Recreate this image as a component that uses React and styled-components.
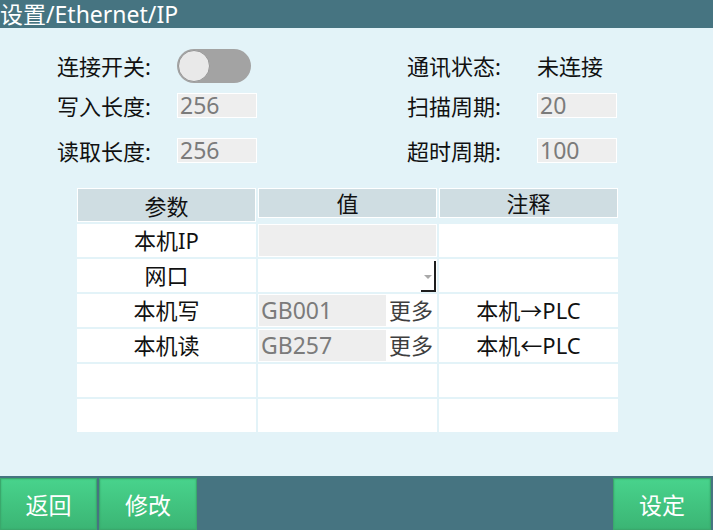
import styled, { createGlobalStyle } from "styled-components";

const FONT = `"Noto Sans", "Noto Sans CJK SC", sans-serif`;

const GlobalStyle = createGlobalStyle`
  html, body {
    margin: 0;
    padding: 0;
  }
  body {
    font-family: ${FONT};
    background: #e3f3f8;
  }
`;

const rows = [
  { name: "本机IP", kind: "field", note: "" },
  { name: "网口", kind: "combo", note: "" },
  { name: "本机写", kind: "more", value: "GB001", note: "本机→PLC" },
  { name: "本机读", kind: "more", value: "GB257", note: "本机←PLC" },
  { name: "", kind: "empty", note: "" },
  { name: "", kind: "empty", note: "" },
];

function ValueCell({ row }) {
  if (row.kind === "field") return <GreyCell />;
  if (row.kind === "combo")
    return (
      <ComboCell>
        <ComboButton>
          <Caret />
        </ComboButton>
      </ComboCell>
    );
  if (row.kind === "more")
    return (
      <SplitCell>
        <SmallInput>{row.value}</SmallInput>
        <MoreText>更多</MoreText>
      </SplitCell>
    );
  return <Cell />;
}

function App() {
  return (
    <Screen>
      <GlobalStyle />
      <TitleBar>设置/Ethernet/IP</TitleBar>
      <Body>
        <Form>
          <FormRow $h={35}>
            <Label>连接开关:</Label>
            <Toggle>
              <Knob />
            </Toggle>
            <Label>通讯状态:</Label>
            <Label>未连接</Label>
          </FormRow>
          <FormRow $h={25} $mt={10}>
            <Label>写入长度:</Label>
            <Input>256</Input>
            <Label>扫描周期:</Label>
            <Input>20</Input>
          </FormRow>
          <FormRow $h={25} $mt={20}>
            <Label>读取长度:</Label>
            <Input>256</Input>
            <Label>超时周期:</Label>
            <Input>100</Input>
          </FormRow>
        </Form>
        <Table>
          <HeadCell $tall>参数</HeadCell>
          <HeadCell>值</HeadCell>
          <HeadCell>注释</HeadCell>
          {rows.map((r, i) => (
            <Row key={i}>
              <Cell>{r.name}</Cell>
              <ValueCell row={r} />
              <Cell>{r.note}</Cell>
            </Row>
          ))}
        </Table>
      </Body>
      <Footer>
        <Button>返回</Button>
        <Button>修改</Button>
        <Spacer />
        <Button>设定</Button>
      </Footer>
    </Screen>
  );
}

const Screen = styled.div`
  width: 713px;
  height: 530px;
  display: flex;
  flex-direction: column;
  background: #e3f3f8;
  overflow: hidden;
`;

const TitleBar = styled.div`
  height: 28px;
  line-height: 28px;
  background: #467481;
  color: #fff;
  font-size: 23px;
  white-space: nowrap;
`;

const Body = styled.div`
  flex: 1;
  padding: 20px 0 0 57px;
`;

const Form = styled.div`
  display: flex;
  flex-direction: column;
`;

const FormRow = styled.div`
  display: grid;
  grid-template-columns: 120px 230px 130px 80px;
  grid-template-rows: 100%;
  align-items: center;
  height: ${(p) => p.$h}px;
  margin-top: ${(p) => p.$mt || 0}px;
`;

const Label = styled.div`
  font-size: 22px;
  line-height: 24px;
  color: #111;
  white-space: nowrap;
`;

const Toggle = styled.div`
  width: 74px;
  height: 34px;
  border-radius: 17px;
  background: #a3a3a3;
  box-sizing: border-box;
  padding: 1px;
  display: flex;
  align-items: center;
`;

const Knob = styled.div`
  width: 32px;
  height: 32px;
  border-radius: 50%;
  background: #e9e9e9;
  box-sizing: border-box;
  border: 1px solid #969696;
`;

const Input = styled.div`
  width: 80px;
  height: 25px;
  box-sizing: border-box;
  border: 1px solid #fff;
  background: #eeeeee;
  color: #7b7b7b;
  font-size: 23px;
  line-height: 22px;
  padding-left: 2px;
`;

const Table = styled.div`
  margin-top: 25px;
  margin-left: 20px;
  display: grid;
  grid-template-columns: 179px 179px 179px;
  grid-auto-rows: 33px;
  grid-template-rows: 34px;
  column-gap: 2px;
  row-gap: 2px;
  width: 541px;
`;

const HeadCell = styled.div`
  align-self: start;
  height: ${(p) => (p.$tall ? 34 : 30)}px;
  box-sizing: border-box;
  border: 1px solid #fff;
  background: #cfdde2;
  font-size: 22px;
  color: #111;
  text-align: center;
  line-height: ${(p) => (p.$tall ? 34 : 28)}px;
`;

const Row = styled.div`
  display: contents;
`;

const Cell = styled.div`
  background: #fff;
  font-size: 22px;
  color: #111;
  text-align: center;
  line-height: 33px;
  white-space: nowrap;
`;

const GreyCell = styled.div`
  background: #eeeeee;
  box-sizing: border-box;
  border: 1px solid #fff;
`;

const ComboCell = styled.div`
  background: #fff;
  display: flex;
  justify-content: flex-end;
`;

const ComboButton = styled.div`
  width: 15px;
  box-sizing: border-box;
  border-right: 2px solid #1e1e1e;
  border-bottom: 2px solid #1e1e1e;
  margin-top: 2px;
  margin-right: 1px;
  display: flex;
  align-items: center;
  justify-content: center;
`;

const Caret = styled.div`
  width: 0;
  height: 0;
  border-left: 4px solid transparent;
  border-right: 4px solid transparent;
  border-top: 4px solid #a9a9a9;
  margin-top: 2px;
`;

const SplitCell = styled.div`
  background: #fff;
  display: flex;
  align-items: stretch;
`;

const SmallInput = styled.div`
  width: 129px;
  box-sizing: border-box;
  border: 1px solid #fff;
  background: #eeeeee;
  color: #7b7b7b;
  font-size: 23px;
  line-height: 31px;
  padding-left: 2px;
`;

const MoreText = styled.div`
  flex: 1;
  font-size: 22px;
  color: #3e3e3e;
  line-height: 33px;
  padding-left: 2px;
  white-space: nowrap;
`;

const Footer = styled.div`
  height: 54px;
  background: #467481;
  display: flex;
  align-items: flex-end;
  gap: 2px;
  padding-right: 2px;
`;

const Spacer = styled.div`
  flex: 1;
`;

const Button = styled.div`
  width: 98px;
  height: 52px;
  box-sizing: border-box;
  border: 1px solid #3aa86c;
  box-shadow: inset 0 0 2px #37a86b;
  background: linear-gradient(#48d38c, #3bb574);
  color: #fff;
  font-size: 23px;
  display: flex;
  align-items: center;
  justify-content: center;
  &:first-child {
    width: 97px;
  }
`;

export default App;
